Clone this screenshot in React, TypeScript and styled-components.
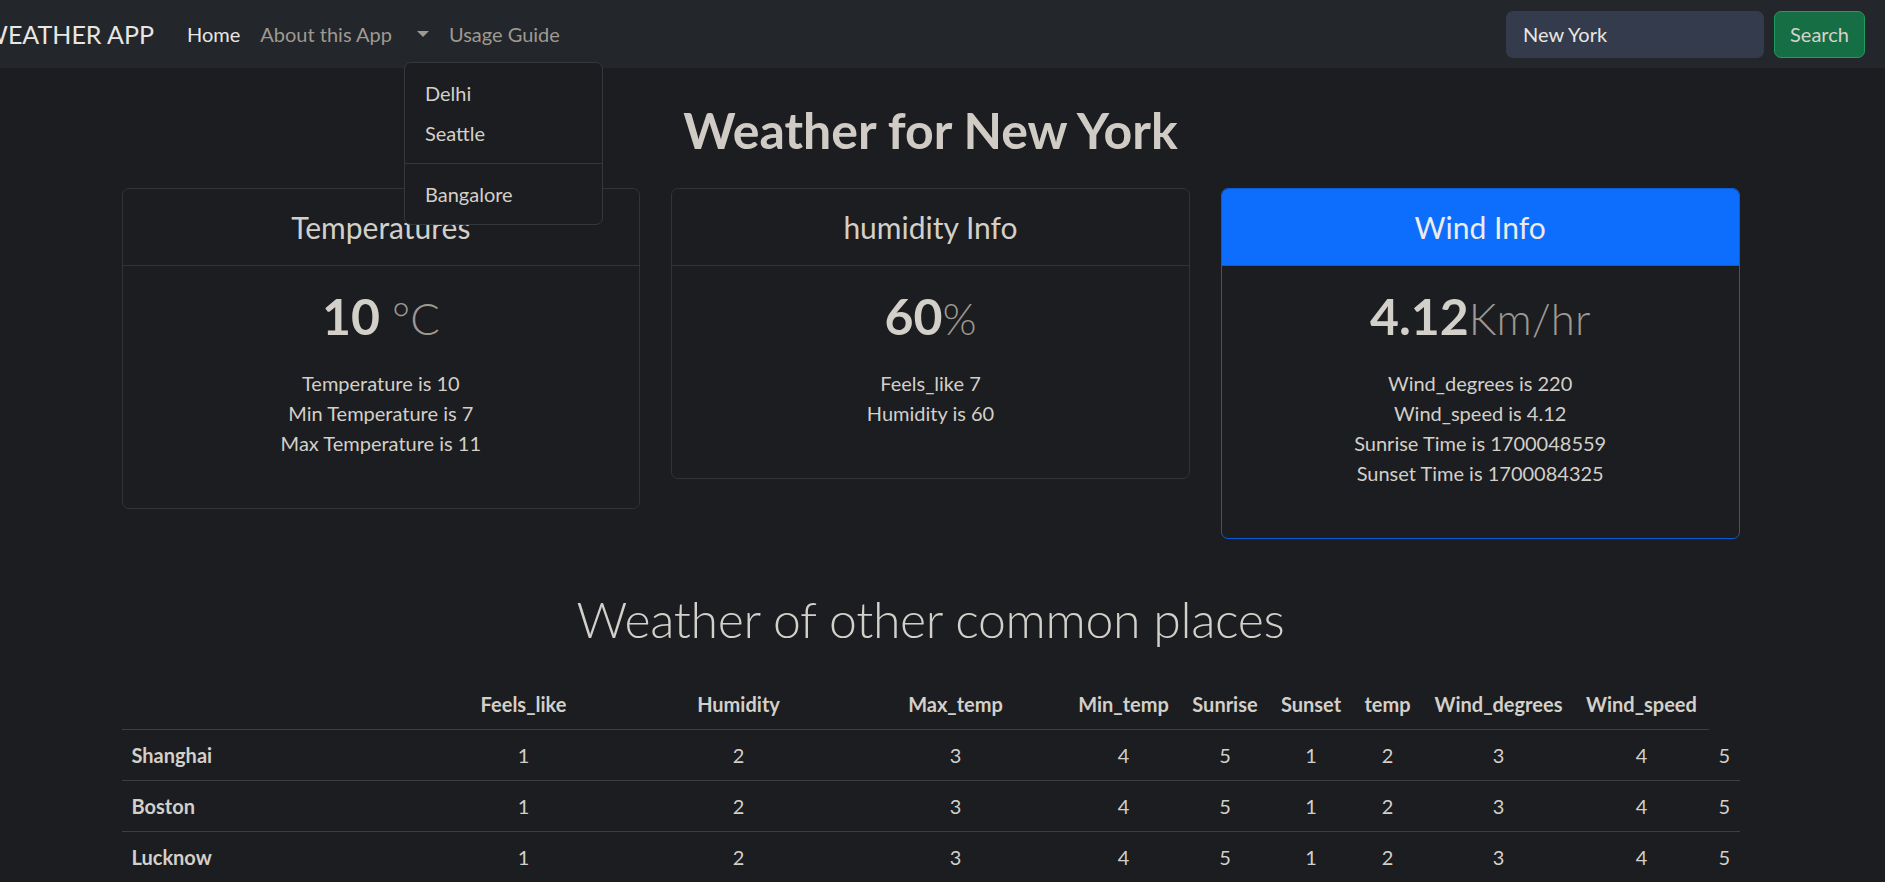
import React from "react";
import styled, { createGlobalStyle } from "styled-components";

const GlobalStyle = createGlobalStyle`
  html, body { margin: 0; padding: 0; }
  body {
    background: #1b1d20;
    color: #d3cfc9;
    font-family: "Lato", "Noto Sans", sans-serif;
    font-size: 20px;
    line-height: 1.5;
  }
  ::-webkit-scrollbar { width: 8px; }
  ::-webkit-scrollbar-track { background: #1f2124; }
  ::-webkit-scrollbar-thumb { background: #3b3e42; }
  * { box-sizing: border-box; }
`;

const Navbar = styled.nav`
  display: flex;
  align-items: center;
  height: 68px;
  padding: 0 20px 0 0;
  background: #23262a;
`;

const Brand = styled.a`
  display: flex;
  justify-content: flex-end;
  width: 154px;
  overflow: hidden;
  white-space: nowrap;
  font-size: 25px;
  line-height: 30px;
  color: #e8e6e3;
  text-decoration: none;
`;

const NavList = styled.ul`
  display: flex;
  align-items: center;
  margin: 0 0 0 23px;
  padding: 0;
  list-style: none;
`;

const NavItem = styled.li`
  position: relative;
`;

const NavLink = styled.a<{ $active?: boolean }>`
  display: block;
  padding: 10px 10px;
  font-size: 20px;
  line-height: 30px;
  color: ${(p) => (p.$active ? "#e8e6e3" : "#9e9a92")};
  text-decoration: none;
  white-space: nowrap;
`;

const Toggle = styled.a`
  display: flex;
  align-items: center;
  height: 50px;
  padding: 0 10px 0 15px;
  &::after {
    content: "";
    display: block;
    border-top: 6px solid #9e9a92;
    border-left: 6px solid transparent;
    border-right: 6px solid transparent;
  }
`;

const Menu = styled.ul`
  position: absolute;
  top: calc(100% + 3px);
  left: 2px;
  z-index: 10;
  min-width: 199px;
  margin: 0;
  padding: 10px 0;
  list-style: none;
  background: #1b1d20;
  border: 1px solid #34383c;
  border-radius: 7px;
`;

const MenuItem = styled.li`
  padding: 5px 20px;
  font-size: 20px;
  line-height: 30px;
  color: #d3cfc9;
  white-space: nowrap;
`;

const MenuDivider = styled.li`
  margin: 10px 0;
  border-top: 1px solid #34383c;
`;

const SearchForm = styled.form`
  display: flex;
  gap: 10px;
  margin-left: auto;
`;

const SearchInput = styled.input`
  width: 258px;
  height: 47px;
  padding: 0 17px;
  border: none;
  border-radius: 7px;
  background: #333b4c;
  color: #e8e6e3;
  font-family: inherit;
  font-size: 20px;
  outline: none;
`;

const SearchButton = styled.button`
  width: 91px;
  height: 47px;
  border: 1px solid #1f9c5f;
  border-radius: 7px;
  background: #166e45;
  color: #d6d2cc;
  font-family: inherit;
  font-size: 20px;
`;

const Main = styled.main`
  width: 1618px;
  margin-left: calc(50% - 821px);
  padding: 32px 0 73px;
`;

const Title = styled.h1`
  margin: 0 0 28px;
  font-size: 50px;
  line-height: 60px;
  font-weight: 700;
  text-align: center;
  color: #d0ccc5;
`;

const CardRow = styled.div`
  display: grid;
  grid-template-columns: repeat(3, 1fr);
  column-gap: 31px;
  align-items: start;
  margin-bottom: 20px;
`;

const Card = styled.div<{ $primary?: boolean }>`
  margin-bottom: 30px;
  border: 1px solid ${(p) => (p.$primary ? "#0a5bd6" : "#303437")};
  border-radius: 7px;
  overflow: hidden;
  text-align: center;
`;

const CardHeader = styled.div<{ $primary?: boolean }>`
  padding: 20px 0;
  background: ${(p) => (p.$primary ? "#0d6efd" : "transparent")};
  border-bottom: 1px solid ${(p) => (p.$primary ? "#0a5bd6" : "#303437")};
`;

const CardTitle = styled.h4<{ $primary?: boolean }>`
  margin: 0;
  font-size: 30px;
  line-height: 36px;
  font-weight: 400;
  color: ${(p) => (p.$primary ? "#ecebe8" : "#d3cfc9")};
`;

const CardBody = styled.div`
  padding: 20px;
`;

const BigValue = styled.h1`
  margin: 0;
  font-size: 50px;
  line-height: 60px;
  font-weight: 700;
  color: #d3cfc9;
`;

const Unit = styled.small`
  font-size: 0.875em;
  font-weight: 300;
  color: #9d9890;
`;

const InfoList = styled.ul`
  margin: 20px 0 30px;
  padding: 0;
  list-style: none;
  font-size: 20px;
  line-height: 30px;
`;

const SectionTitle = styled.h2`
  margin: 0 0 30px;
  font-size: 50px;
  line-height: 60px;
  font-weight: 300;
  letter-spacing: -0.35px;
  text-align: center;
  color: #d3cfc9;
`;

const Table = styled.table`
  width: 100%;
  border-collapse: collapse;
  table-layout: fixed;
`;

const Cell = styled.td<{ $head?: boolean; $start?: boolean }>`
  padding: 10px;
  font-size: 20px;
  line-height: 30px;
  font-weight: ${(p) => (p.$head ? 700 : 400)};
  text-align: ${(p) => (p.$start ? "left" : "center")};
  border-bottom: 1px solid #3b3f43;
  white-space: nowrap;
  color: #d3cfc9;
`;

const colWidths = [293, 218, 212, 222, 114, 89, 83, 70, 152, 134, 31];
const headers = ["Feels_like", "Humidity", "Max_temp", "Min_temp", "Sunrise", "Sunset", "temp", "Wind_degrees", "Wind_speed"];
const cities = ["Shanghai", "Boston", "Lucknow"];
const values = [1, 2, 3, 4, 5, 1, 2, 3, 4, 5];

export default function App() {
  return (
    <>
      <GlobalStyle />
      <Navbar>
        <Brand href="#">WEATHER APP</Brand>
        <NavList>
          <NavItem>
            <NavLink $active href="#">Home</NavLink>
          </NavItem>
          <NavItem>
            <NavLink href="#">About this App</NavLink>
          </NavItem>
          <NavItem>
            <Toggle href="#" />
            <Menu>
              <MenuItem>Delhi</MenuItem>
              <MenuItem>Seattle</MenuItem>
              <MenuDivider />
              <MenuItem>Bangalore</MenuItem>
            </Menu>
          </NavItem>
          <NavItem>
            <NavLink href="#">Usage Guide</NavLink>
          </NavItem>
        </NavList>
        <SearchForm onSubmit={(e) => e.preventDefault()}>
          <SearchInput defaultValue="New York" />
          <SearchButton type="submit">Search</SearchButton>
        </SearchForm>
      </Navbar>
      <Main>
        <Title>Weather for New York</Title>
        <CardRow>
          <Card>
            <CardHeader>
              <CardTitle>Temperatures</CardTitle>
            </CardHeader>
            <CardBody>
              <BigValue>
                10 <Unit>°C</Unit>
              </BigValue>
              <InfoList>
                <li>Temperature is 10</li>
                <li>Min Temperature is 7</li>
                <li>Max Temperature is 11</li>
              </InfoList>
            </CardBody>
          </Card>
          <Card>
            <CardHeader>
              <CardTitle>humidity Info</CardTitle>
            </CardHeader>
            <CardBody>
              <BigValue>
                60<Unit>%</Unit>
              </BigValue>
              <InfoList>
                <li>Feels_like 7</li>
                <li>Humidity is 60</li>
              </InfoList>
            </CardBody>
          </Card>
          <Card $primary>
            <CardHeader $primary>
              <CardTitle $primary>Wind Info</CardTitle>
            </CardHeader>
            <CardBody>
              <BigValue>
                4.12<Unit>Km/hr</Unit>
              </BigValue>
              <InfoList>
                <li>Wind_degrees is 220</li>
                <li>Wind_speed is 4.12</li>
                <li>Sunrise Time is 1700048559</li>
                <li>Sunset Time is 1700084325</li>
              </InfoList>
            </CardBody>
          </Card>
        </CardRow>
        <SectionTitle>Weather of other common places</SectionTitle>
        <Table>
          <colgroup>
            {colWidths.map((w, i) => (
              <col key={i} style={{ width: w }} />
            ))}
          </colgroup>
          <thead>
            <tr>
              <Cell as="th" $head />
              {headers.map((h) => (
                <Cell as="th" $head key={h}>
                  {h}
                </Cell>
              ))}
            </tr>
          </thead>
          <tbody>
            {cities.map((c) => (
              <tr key={c}>
                <Cell as="th" $head $start>
                  {c}
                </Cell>
                {values.map((v, i) => (
                  <Cell key={i}>{v}</Cell>
                ))}
              </tr>
            ))}
          </tbody>
        </Table>
      </Main>
    </>
  );
}
